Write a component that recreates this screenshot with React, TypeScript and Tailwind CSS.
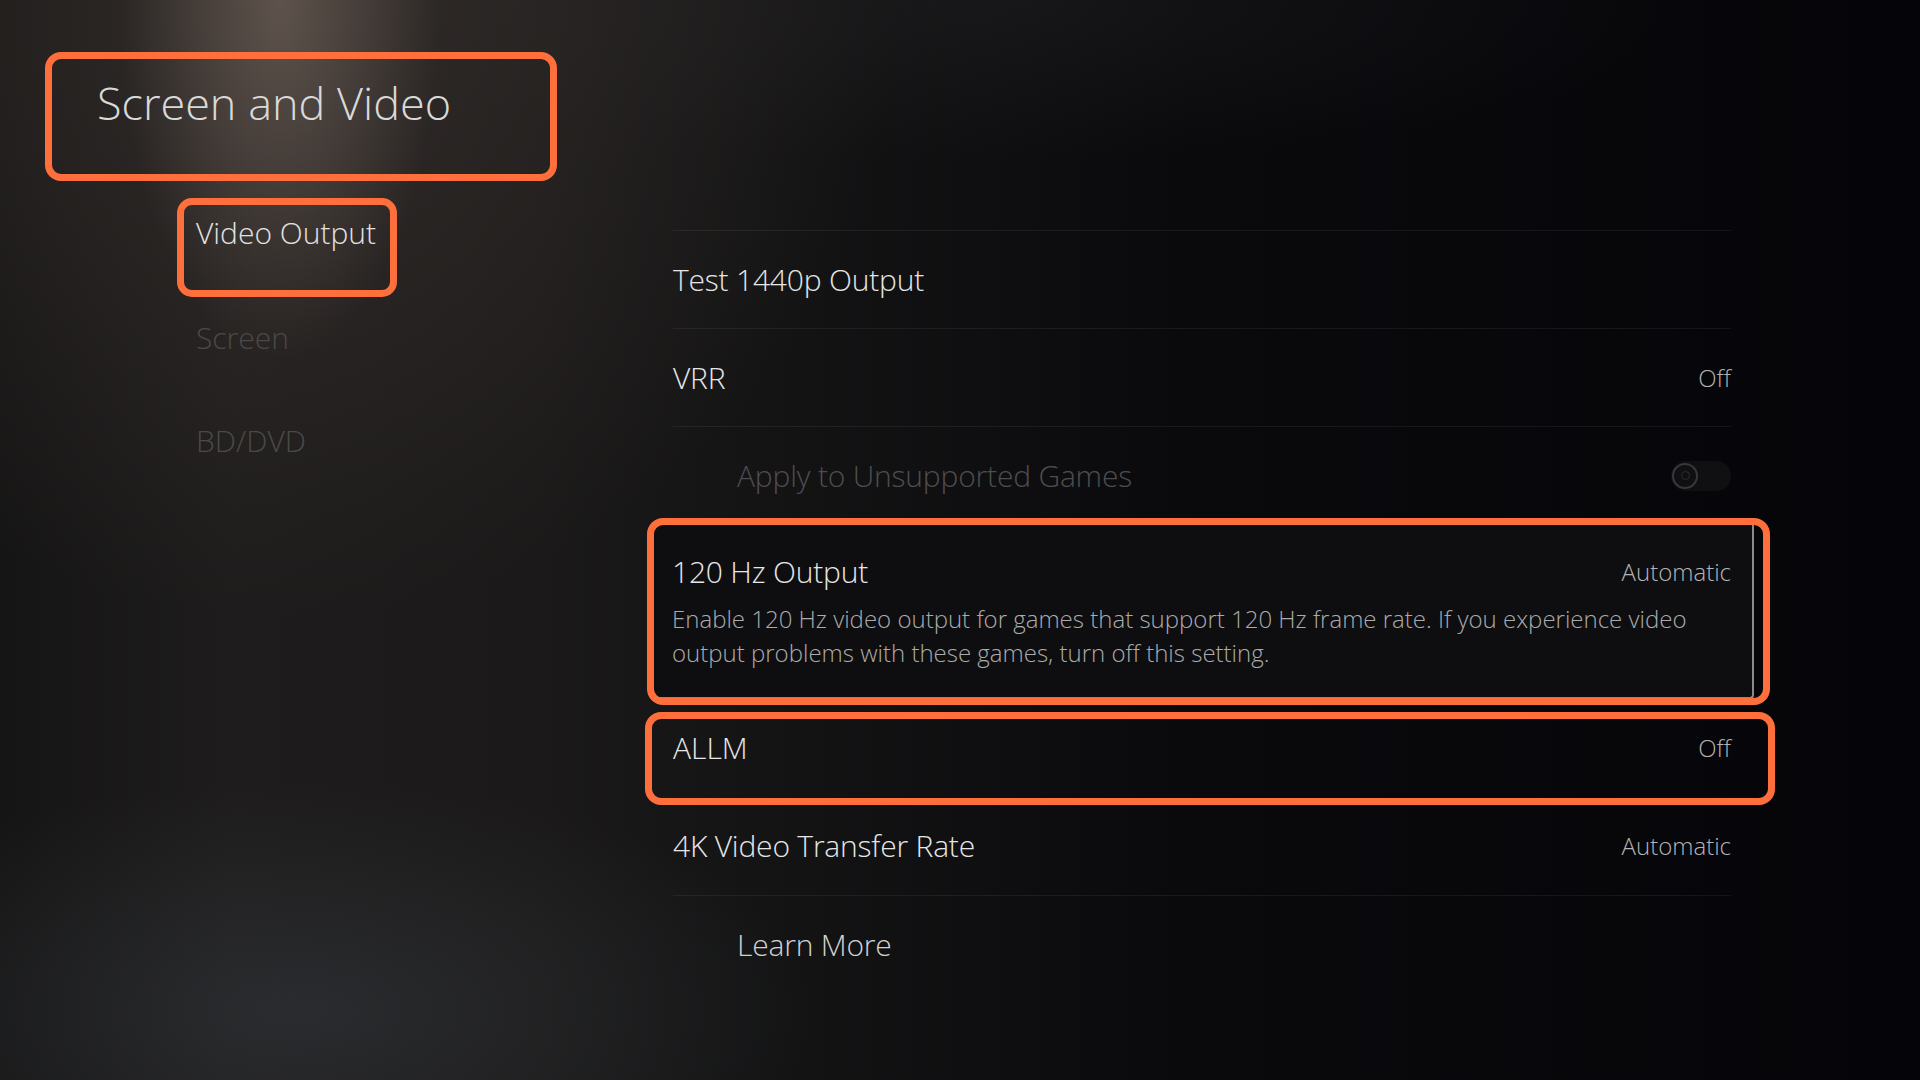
import React from "react";

function Row({
  label,
  value,
  indent = false,
  dim = false,
  border = true,
  children,
  h = "h-[98px]",
  labelClass = "",
}: {
  label: string;
  value?: string;
  indent?: boolean;
  dim?: boolean;
  border?: boolean;
  children?: React.ReactNode;
  h?: string;
  labelClass?: string;
}) {
  return (
    <div
      className={`relative flex items-center justify-between ${h} ${
        border ? "border-t border-[#ffffff10]" : ""
      }`}
    >
      <span
        className={`text-[30px] leading-[30px] tracking-[-0.2px] ${indent ? "pl-[64px]" : ""} ${
          dim ? "text-[#4d4d50]" : "text-[#e6e6e6]"
        } ${labelClass}`}
      >
        {label}
      </span>
      {value && (
        <span className="text-[24px] leading-[24px] text-[#b4b4b4]">{value}</span>
      )}
      {children}
    </div>
  );
}

export default function App() {
  return (
    <div className="relative w-[1920px] h-[1080px] overflow-hidden font-['Open_Sans',sans-serif] font-light bg-[#0a0a0c] bg-[image:radial-gradient(ellipse_160px_360px_at_280px_0px,rgba(130,114,104,0.55),transparent),radial-gradient(ellipse_620px_620px_at_280px_0px,rgba(78,68,62,0.42),transparent),radial-gradient(ellipse_520px_230px_at_300px_1010px,rgba(62,70,78,0.38),transparent),radial-gradient(ellipse_700px_160px_at_1000px_0px,rgba(40,38,40,0.35),transparent),linear-gradient(to_right,#161515_0%,#1e1c1c_12%,#1b1919_28%,#131314_42%,#0a0a0d_62%,#050509_100%)]">
      <div className="flex">
        {/* Left column */}
        <div className="w-[600px] shrink-0 flex flex-col pl-[97px] pt-[81px]">
          <div className="relative">
            <h1 className="text-[45px] leading-[44px] text-[#d9d9d9] font-light whitespace-nowrap">
              Screen and Video
            </h1>
            <div className="absolute -left-[52px] -top-[29px] w-[512px] h-[129px] border-[7px] border-[#ff6f3c] rounded-[16px]" />
          </div>
          <nav className="ml-[99px] mt-[93px] flex flex-col gap-[73px]">
            <div className="relative">
              <span className="text-[30px] leading-[30px] text-[#e2e2e2] whitespace-nowrap">
                Video Output
              </span>
              <div className="absolute -left-[19px] -top-[20px] w-[220px] h-[99px] border-[7px] border-[#ff6f3c] rounded-[15px]" />
            </div>
            <span className="text-[30px] leading-[30px] text-[#4b4948]">Screen</span>
            <span className="text-[30px] leading-[30px] text-[#4b4948]">BD/DVD</span>
          </nav>
        </div>

        {/* Right column */}
        <div className="ml-[73px] mt-[230px] w-[1058px] flex flex-col">
          <Row label="Test 1440p Output" />
          <Row label="VRR" value="Off" />
          <Row label="Apply to Unsupported Games" indent dim>
            <div className="flex items-center w-[60px] h-[30px] rounded-full bg-[#101013]">
              <div className="flex items-center justify-center w-[26px] h-[26px] ml-[1px] rounded-full border-2 border-[#38383b]">
                <div className="w-[9px] h-[9px] rounded-full border border-[#2c2c2f]" />
              </div>
            </div>
          </Row>

          {/* 120 Hz card */}
          <div className="relative -ml-[19px] -mr-[23px] pl-[18px] pr-[21px] pt-[33px] pb-[27px] bg-[#0e0e11] border-r-2 border-b-2 border-[#8a8a8a] rounded-br-[4px]">
            <div className="flex items-center justify-between">
              <span className="text-[30px] leading-[30px] tracking-[-0.2px] text-[#e6e6e6]">120 Hz Output</span>
              <span className="text-[24px] leading-[24px] text-[#b4b4b4]">Automatic</span>
            </div>
            <p className="mt-[15px] text-[24px] leading-[34px] text-[#ababab]">
              Enable 120 Hz video output for games that support 120 Hz frame rate. If you experience video
              <br />
              output problems with these games, turn off this setting.
            </p>
            <div className="absolute -left-[7px] -top-[6px] -right-[18px] -bottom-[8px] border-[7px] border-[#ff6f3c] rounded-[16px]" />
          </div>

          <div className="relative flex items-center justify-between h-[98px]">
            <span className="text-[30px] leading-[30px] text-[#e6e6e6]">ALLM</span>
            <span className="text-[24px] leading-[24px] text-[#b4b4b4]">Off</span>
            <div className="absolute -left-[28px] top-[13px] -right-[44px] -bottom-[8px] border-[7px] border-[#ff6f3c] rounded-[16px]" />
          </div>

          <Row label="4K Video Transfer Rate" value="Automatic" border={false} />
          <Row label="Learn More" indent labelClass="!text-[#d2d2d2]" />
        </div>
      </div>
    </div>
  );
}
